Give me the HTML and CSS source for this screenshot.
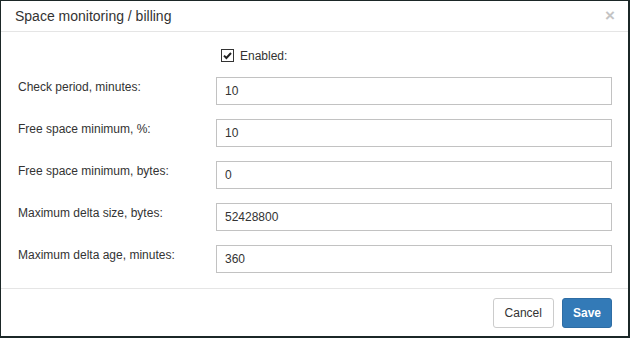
FILE: index.html
```html
<!DOCTYPE html>
<html lang="en">
  <head>
    <meta charset="UTF-8" />
    <title>Space monitoring / billing</title>
    <link rel="stylesheet" href="styles.css">
  </head>
  <body>
    <div class="modal">
      <div class="modal-header">
        <h4 class="modal-title">Space monitoring / billing</h4>
        <button class="close" type="button">&times;</button>
      </div>
      <form class="modal-body">
        <div class="check-row">
          <label>
            <span class="checkbox">
              <svg width="11" height="11" viewBox="0 0 11 11">
                <path d="M2 5.6 L4.4 8 L9 3" fill="none" stroke="#222" stroke-width="2" />
              </svg>
            </span>
            Enabled:
          </label>
        </div>
        <div class="form-row">
          <label for="checkPeriod">Check period, minutes:</label>
          <input type="text" id="checkPeriod" value="10" />
        </div>
        <div class="form-row">
          <label for="freePercent">Free space minimum, %:</label>
          <input type="text" id="freePercent" value="10" />
        </div>
        <div class="form-row">
          <label for="freeBytes">Free space minimum, bytes:</label>
          <input type="text" id="freeBytes" value="0" />
        </div>
        <div class="form-row">
          <label for="deltaSize">Maximum delta size, bytes:</label>
          <input type="text" id="deltaSize" value="52428800" />
        </div>
        <div class="form-row">
          <label for="deltaAge">Maximum delta age, minutes:</label>
          <input type="text" id="deltaAge" value="360" />
        </div>
      </form>
      <div class="modal-footer">
        <button class="btn" type="button">Cancel</button>
        <button class="btn btn-primary" type="button">Save</button>
      </div>
    </div>
  </body>
</html>
```

FILE: styles.css
```css
* {
  margin: 0;
  padding: 0;
  box-sizing: border-box;
}
body {
  background-color: #1b2727;
  font-family: "Liberation Sans", Arial, sans-serif;
  font-size: 12px;
  color: #333;
}
.modal {
  margin: 1px 0 0 1px;
  width: 627px;
  height: 335px;
  background-color: #fff;
  display: flex;
  flex-direction: column;
}
.modal-header {
  height: 31px;
  padding: 0 13px 0 14px;
  border-bottom: 1px solid #e5e5e5;
  display: flex;
  align-items: center;
  justify-content: space-between;
}
.modal-title {
  font-size: 14px;
  font-weight: normal;
  color: #333;
}
.close {
  border: none;
  background: none;
  font-family: "Liberation Sans", Arial, sans-serif;
  font-size: 17px;
  font-weight: bold;
  line-height: 1;
  color: #c4c4c4;
  margin-top: -2px;
}
.modal-body {
  flex: 1;
  padding: 16px 16px 0 17px;
}
.check-row {
  height: 15px;
  margin-bottom: 14px;
  padding-left: 203px;
  display: flex;
  align-items: center;
}
.check-row label {
  display: flex;
  align-items: center;
  gap: 6px;
  font-size: 12px;
}
.checkbox {
  width: 13px;
  height: 13px;
  border: 1px solid #333;
  background-color: #fff;
  display: flex;
  align-items: center;
  justify-content: center;
}
.form-row {
  display: flex;
  align-items: flex-start;
  margin-bottom: 14px;
}
.form-row label {
  width: 198px;
  padding-top: 2px;
  line-height: 17px;
}
.form-row input {
  flex: 1;
  height: 28px;
  border: 1px solid #c2c2c2;
  padding: 0 8px;
  font-family: "Liberation Sans", Arial, sans-serif;
  font-size: 12px;
  color: #333;
}
.modal-footer {
  height: 48px;
  border-top: 1px solid #e5e5e5;
  padding: 9px 16px 0 0;
  display: flex;
  justify-content: flex-end;
  align-items: flex-start;
  gap: 8px;
}
.btn {
  height: 30px;
  padding: 0 11px;
  border: 1px solid #ccc;
  border-radius: 3px;
  background-color: #fff;
  font-family: "Liberation Sans", Arial, sans-serif;
  font-size: 12px;
  color: #333;
}
.btn-primary {
  background-color: #337ab7;
  border-color: #2e6da4;
  color: #fff;
  font-weight: bold;
  padding: 0 10px;
}
```
